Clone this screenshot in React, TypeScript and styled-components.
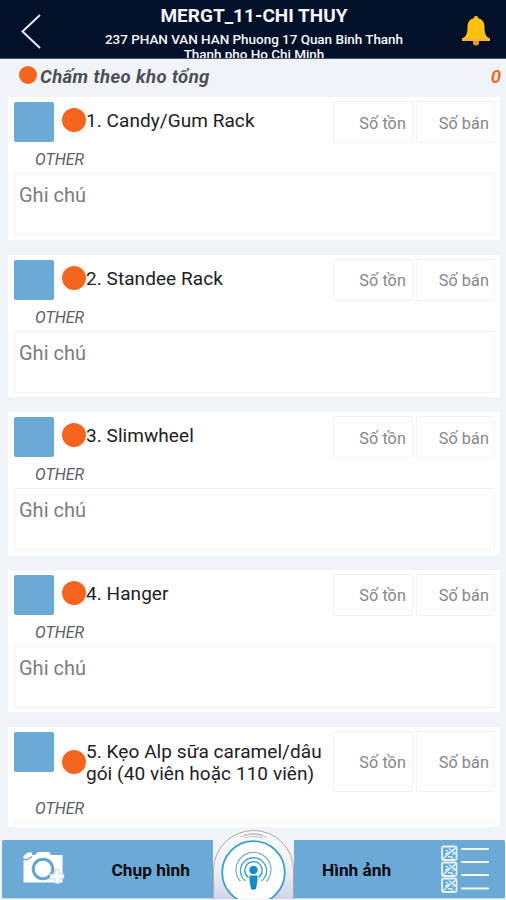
import React from "react";
import styled, { createGlobalStyle } from "styled-components";

const GlobalStyle = createGlobalStyle`
  * { box-sizing: border-box; }
  body { margin: 0; background: #f0f3f8; font-family: Roboto, sans-serif; }
`;

const Screen = styled.div`
  width: 506px;
  height: 900px;
  display: flex;
  flex-direction: column;
  overflow: hidden;
  background: #f0f3f8;
`;

const Header = styled.header`
  height: 59px;
  flex: none;
  display: grid;
  grid-template-columns: 60px 1fr 60px;
  background: #031029;
  border-bottom: 1px solid #4d5563;
  overflow: hidden;
  color: #f4f6fa;
`;

const BackIcon = styled.svg`
  width: 24px;
  height: 38px;
  margin: 13px 0 0 20px;
`;

const BellIcon = styled.svg`
  width: 30px;
  height: 32px;
  margin: 15px 0 0 15px;
`;

const Heading = styled.div`
  height: 58px;
  padding-left: 2px;
  overflow: hidden;
  text-align: center;
  white-space: nowrap;
`;

const StoreName = styled.div`
  margin-top: 5px;
  font-size: 19px;
  line-height: 22px;
  font-weight: 700;
`;

const Address = styled.div`
  margin-top: 5px;
  font-size: 13.5px;
  line-height: 15px;
  font-weight: 500;
  letter-spacing: -0.04px;
`;

const Summary = styled.div`
  height: 38px;
  flex: none;
  display: flex;
  align-items: flex-start;
  padding: 7px 5px 0 19px;
  color: #4c4f54;
  font-size: 18.5px;
  line-height: 22px;
  font-weight: 700;
  font-style: italic;
`;

const Dot = styled.span<{ $size: number }>`
  flex: none;
  width: ${(p) => p.$size}px;
  height: ${(p) => p.$size}px;
  border-radius: 50%;
  background: #f5651e;
`;

const SummaryLabel = styled.span`
  flex: 1;
  margin-left: 3px;
  letter-spacing: 0.4px;
`;

const SummaryCount = styled.span`
  color: #ee6a2a;
`;

const List = styled.main`
  height: 730px;
  flex: none;
  display: flex;
  flex-direction: column;
  gap: 15px;
  padding: 0 6px 0 8px;
  overflow: hidden;
`;

const Card = styled.section`
  flex: none;
  padding: 4px 5px 4.5px 6px;
  background: #fefefe;
`;

const ItemRow = styled.div<{ $tall?: boolean }>`
  height: ${(p) => (p.$tall ? 61 : 42)}px;
  display: flex;
`;

const Thumb = styled.div`
  flex: none;
  width: 40px;
  height: 40px;
  margin: 1px 8px 0 0;
  border-radius: 2px;
  background: #6ba9d6;
`;

const ItemName = styled.div<{ $tall?: boolean }>`
  width: 271px;
  flex: none;
  display: flex;
  align-items: center;
  padding-bottom: ${(p) => (p.$tall ? 0 : 4)}px;
  color: #202124;
  font-size: 19px;
  line-height: 22.5px;
  letter-spacing: 0.06px;
  white-space: pre-line;
`;

const NameText = styled.span`
  padding-top: 3px;
`;

const Quantity = styled.div`
  width: 80px;
  flex: none;
  margin-right: 3px;
  display: flex;
  align-items: center;
  justify-content: flex-end;
  padding: 2px 6px 0 0;
  border: 1px solid #f1f2f4;
  border-radius: 2px;
  color: #85878a;
  font-size: 16.2px;
  letter-spacing: 0.1px;

  &:last-child {
    width: 79px;
    margin-right: 0;
    padding-right: 5px;
  }
`;

const Category = styled.div`
  height: 30px;
  padding: 2px 0 0 21px;
  color: #5d5f63;
  font-size: 16px;
  line-height: 30px;
  font-style: italic;
`;

const Note = styled.div`
  height: 62px;
  padding: 9px 4px;
  border: 1px solid #f1f2f4;
  color: #7c7e81;
  font-size: 20px;
  line-height: 24px;
`;

const Footer = styled.footer`
  height: 73px;
  flex: none;
  display: flex;
  align-items: flex-start;
  padding: 2px 1px 0 2px;
`;

const Action = styled.button<{ $first?: boolean }>`
  height: 59px;
  width: ${(p) => (p.$first ? 211 : 211)}px;
  margin-top: 11px;
  padding: ${(p) => (p.$first ? "0 23px 0 20px" : "0 16px 0 28px")};
  display: flex;
  align-items: center;
  justify-content: space-between;
  border: 0;
  border-bottom: 1px solid #c5dcee;
  border-radius: ${(p) => (p.$first ? "2px 0 0 2px" : "0 2px 2px 0")};
  background: #6ba9d6;
  color: #080b0e;
  font: 700 17.3px/24px Roboto, sans-serif;
  white-space: nowrap;
`;

const ActionLabel = styled.span`
  padding-top: 2px;
`;

const ActionIcon = styled.svg`
  flex: none;
`;

const Beacon = styled.svg`
  width: 81px;
  height: 70px;
  flex: none;
`;

const items = [
  { name: "1. Candy/Gum Rack" },
  { name: "2. Standee Rack" },
  { name: "3. Slimwheel" },
  { name: "4. Hanger" },
  { name: "5. Kẹo Alp sữa caramel/dâu\ngói (40 viên hoặc 110 viên)", tall: true },
];

function CameraIcon() {
  return (
    <ActionIcon width="44" height="36" viewBox="0 0 44 36">
      <path d="M1.500 5L6 1.500h4V4h3l3-3h11l2 3h11.500v27.500H1.500z" fill="#fff" />
      <path d="M1 8.500h4.500L10 5.500" fill="none" stroke="#6ba9d6" strokeWidth="1.4" />
      <circle cx="21" cy="18" r="9.800" fill="#fff" stroke="#65a5d0" strokeWidth="3" />
      <path d="M33 18.500h4V23h5v4.500h-4v5h-5V28h-5v-5h5z" fill="#fff" stroke="#a8cce5" strokeWidth="0.7" />
    </ActionIcon>
  );
}

function ChecklistIcon() {
  return (
    <ActionIcon width="48" height="48" viewBox="0 0 48 48">
      {[1.5, 17.5, 33.5].map((y) => (
        <g key={y} transform={`translate(1 ${y})`} fill="none">
          <rect width="14.500" height="13.500" rx="1.500" stroke="#e5f2fb" strokeWidth="1.800" />
          <path d="M0 13L14 1M4 3.500l3 3-4 1M6 10l4 .5 1 2M10 4l3 3-3 1M7 2l2 2" stroke="#e5f2fb" strokeWidth="1.300" />
        </g>
      ))}
      <path d="M21 4h26M21 17h26M21 30h26M21 43.500h26" stroke="#f2fbff" strokeWidth="2" strokeLinecap="round" />
    </ActionIcon>
  );
}

function BeaconButton() {
  return (
    <Beacon viewBox="0 0 81 70">
      <defs>
        <linearGradient id="shell" x1="0" y1="0" x2="0" y2="1">
          <stop offset="0" stopColor="#fafafa" />
          <stop offset="0.6" stopColor="#ededf4" />
          <stop offset="1" stopColor="#cfd4e9" />
        </linearGradient>
      </defs>
      <path d="M.5 70V41a40 39.500 0 0 1 80 0v29" fill="url(#shell)" stroke="#aaa9ac" />
      <path d="M27 8q13-5 27 0M31 6q9-3 19 0M31 9q10-3 19 0" fill="none" stroke="#c6c6c8" strokeWidth="1.200" />
      <circle cx="40.500" cy="43.500" r="31.300" fill="#fff" stroke="#36a2c9" strokeWidth="1.800" />
      <g fill="none">
        <path d="M27.500 52.500a17.500 17.500 0 1 1 26 0" stroke="#7eaebf" strokeWidth="1.200" />
        <path d="M32.500 52a13 13 0 1 1 16 0" stroke="#4aa8c8" strokeWidth="1.400" />
        <path d="M35.500 48.500a8.700 8.700 0 1 1 10 0" stroke="#2c9dc9" strokeWidth="1.300" />
      </g>
      <circle cx="40.500" cy="41" r="4.200" fill="#168bc4" />
      <path d="M36.500 46.500h8v5.500l-1.500 8q-2.500 1.500-5 0l-1.500-8z" fill="#168bc4" />
    </Beacon>
  );
}

export default function App() {
  return (
    <>
      <GlobalStyle />
      <Screen>
        <Header>
          <BackIcon viewBox="0 0 24 38">
            <path d="M20 2L2.500 18.500 20 35" fill="none" stroke="#e9edf2" strokeWidth="2" />
          </BackIcon>
          <Heading>
            <StoreName>MERGT_11-CHI THUY</StoreName>
            <Address>
              237 PHAN VAN HAN Phuong 17 Quan Binh Thanh
              <br />
              Thanh pho Ho Chi Minh
            </Address>
          </Heading>
          <BellIcon viewBox="0 0 30 32">
            <path d="M15 1c2 0 2 1 2.200 2.200C22 4.200 23.500 8 23.500 12c0 7 1.500 10 5.500 11.500V26H1v-2.500C5 22 6.500 19 6.500 12c0-4 1.500-7.800 6.300-8.800C13 2 13 1 15 1z" fill="#fcc013" />
            <path d="M1 23.500h28V26H1z" fill="#f2b344" />
            <path d="M12 26h6v3q-3 3-6 0z" fill="#e89827" />
          </BellIcon>
        </Header>
        <Summary>
          <Dot $size={18} />
          <SummaryLabel>Chấm theo kho tổng</SummaryLabel>
          <SummaryCount>0</SummaryCount>
        </Summary>
        <List>
          {items.map((item) => (
            <Card key={item.name}>
              <ItemRow $tall={item.tall}>
                <Thumb />
                <ItemName $tall={item.tall}>
                  <Dot $size={24} />
                  <NameText>{item.name}</NameText>
                </ItemName>
                <Quantity>Số tồn</Quantity>
                <Quantity>Số bán</Quantity>
              </ItemRow>
              <Category>OTHER</Category>
              <Note>Ghi chú</Note>
            </Card>
          ))}
        </List>
        <Footer>
          <Action $first>
            <CameraIcon />
            <ActionLabel>Chụp hình</ActionLabel>
          </Action>
          <BeaconButton />
          <Action>
            <ActionLabel>Hình ảnh</ActionLabel>
            <ChecklistIcon />
          </Action>
        </Footer>
      </Screen>
    </>
  );
}
